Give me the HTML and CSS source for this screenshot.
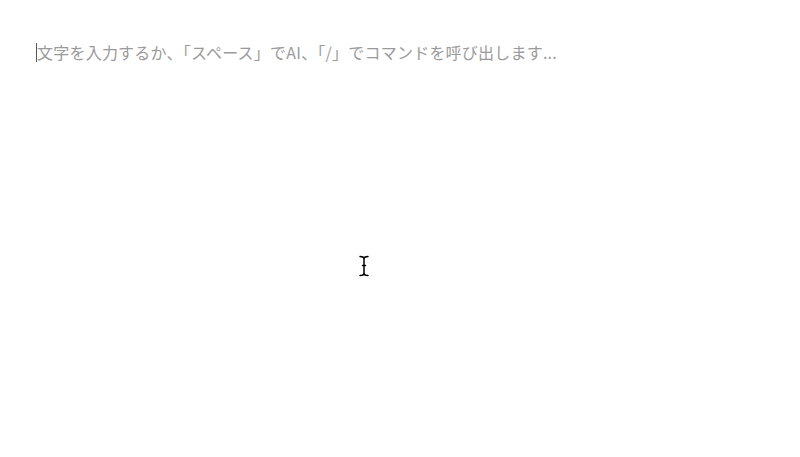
FILE: index.html
```html
<!DOCTYPE html>
<html lang="ja">
<head>
<meta charset="utf-8">
<link rel="stylesheet" href="styles.css">
</head>
<body>
<div class="editor">
  <p class="line"><span class="caret"></span><span class="placeholder">文字を入力するか、「スペース」でAI、「/」でコマンドを呼び出します...</span></p>
</div>
<svg class="ibeam" width="12" height="22" viewBox="0 0 12 22">
  <g fill="none" stroke="#fff" stroke-width="3.2" stroke-linecap="round">
    <path d="M2 1.5 C4 1.5 6 2 6 4 C6 2 8 1.5 10 1.5 M6 4 V18 M2 20.5 C4 20.5 6 20 6 18 C6 20 8 20.5 10 20.5 M4.5 10.5 H7.5"/>
  </g>
  <g fill="none" stroke="#000" stroke-width="1.5" stroke-linecap="round">
    <path d="M2 1.5 C4 1.5 6 2 6 4 C6 2 8 1.5 10 1.5 M6 4 V18 M2 20.5 C4 20.5 6 20 6 18 C6 20 8 20.5 10 20.5 M4.5 10.5 H7.5"/>
  </g>
</svg>
</body>
</html>
```
FILE: styles.css
```css
html, body {
  margin: 0;
  padding: 0;
  background: #ffffff;
  width: 800px;
  height: 457px;
  overflow: hidden;
}
body {
  font-family: "Noto Sans CJK JP", "Noto Sans", sans-serif;
}
.editor {
  padding: 40px 36px 0 36px;
}
.line {
  margin: 0;
  display: flex;
  align-items: center;
  height: 24px;
  font-size: 16px;
  line-height: 24px;
  white-space: nowrap;
}
.caret {
  width: 1px;
  height: 19px;
  background: #555555;
  flex: none;
}
.placeholder {
  color: #9a9a9a;
  letter-spacing: 0.22px;
}
.ibeam {
  position: absolute;
  left: 358px;
  top: 255px;
}
```
